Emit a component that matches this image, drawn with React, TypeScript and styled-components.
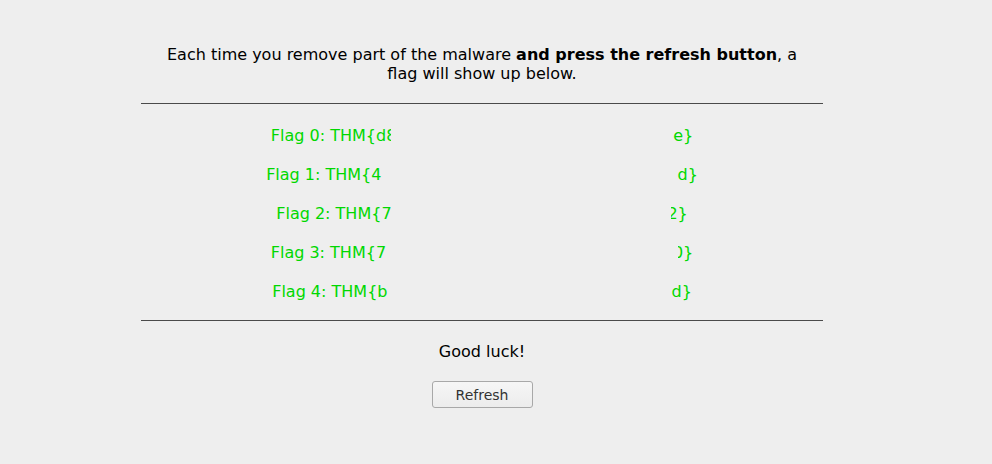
import React from "react";
import styled, { createGlobalStyle } from "styled-components";

const Global = createGlobalStyle`
  html, body { margin: 0; padding: 0; background: #eeeeee; }
  body { font-family: "DejaVu Sans", "Liberation Sans", sans-serif; color: #000; }
`;

const Page = styled.main`
  width: 682px;
  margin-left: 141px;
  padding-top: 45px;
  display: flex;
  flex-direction: column;
  align-items: stretch;
  text-align: center;
`;

const Intro = styled.p`
  margin: 0 0 20px;
  font-size: 16px;
  line-height: 19px;
  padding: 0 18px;
`;

const Rule = styled.hr`
  width: 100%;
  margin: 0;
  border: none;
  border-top: 1px solid #4a4a4a;
  height: 0;
`;

const FlagList = styled.div`
  display: flex;
  flex-direction: column;
  align-items: center;
  gap: 20px;
  padding: 22px 0 19px;
`;

const FlagRow = styled.div`
  display: flex;
  align-items: baseline;
  font-size: 16px;
  line-height: 19px;
  color: #00d800;
  white-space: pre;
`;

const Hidden = styled.span<{ $w: number }>`
  display: inline-block;
  width: ${(p) => p.$w}px;
`;

const Clip = styled.span<{ $w: number; $right?: boolean }>`
  display: inline-block;
  width: ${(p) => p.$w}px;
  overflow: hidden;
  direction: ${(p) => (p.$right ? "rtl" : "ltr")};
  vertical-align: bottom;
`;

const Luck = styled.p`
  margin: 22px 0 0;
  font-size: 16px;
  line-height: 18px;
`;

const RefreshButton = styled.button`
  align-self: center;
  margin-top: 20px;
  width: 101px;
  height: 27px;
  font-family: "DejaVu Sans", "Liberation Sans", sans-serif;
  font-size: 14px;
  color: #333;
  background: linear-gradient(#f6f6f6, #ececec);
  border: 1px solid #a8a8a8;
  border-radius: 3px;
  padding: 0;
  cursor: pointer;
`;

const flags = [
  { head: "Flag 0: THM{d", cutL: "8", cutLW: 5, gap: 282, cutR: "", cutRW: 0, tail: "e}" },
  { head: "Flag 1: THM{4", cutL: "", cutLW: 0, gap: 296, cutR: "", cutRW: 0, tail: "d}" },
  { head: "Flag 2: THM{7", cutL: "", cutLW: 0, gap: 279, cutR: "2", cutRW: 7, tail: "}" },
  { head: "Flag 3: THM{7", cutL: "", cutLW: 0, gap: 292, cutR: "0", cutRW: 5, tail: "}" },
  { head: "Flag 4: THM{b", cutL: "", cutLW: 0, gap: 284, cutR: "", cutRW: 0, tail: "d}" },
];

export default function App() {
  return (
    <>
      <Global />
      <Page>
        <Intro>
          Each time you remove part of the malware <b>and press the refresh button</b>, a flag will show up below.
        </Intro>
        <Rule />
        <FlagList>
          {flags.map((f) => (
            <FlagRow key={f.head}>
              {f.head}
              {f.cutL && <Clip $w={f.cutLW}>{f.cutL}</Clip>}
              <Hidden $w={f.gap} />
              {f.cutR && <Clip $w={f.cutRW} $right>{f.cutR}</Clip>}
              {f.tail}
            </FlagRow>
          ))}
        </FlagList>
        <Rule />
        <Luck>Good luck!</Luck>
        <RefreshButton>Refresh</RefreshButton>
      </Page>
    </>
  );
}
